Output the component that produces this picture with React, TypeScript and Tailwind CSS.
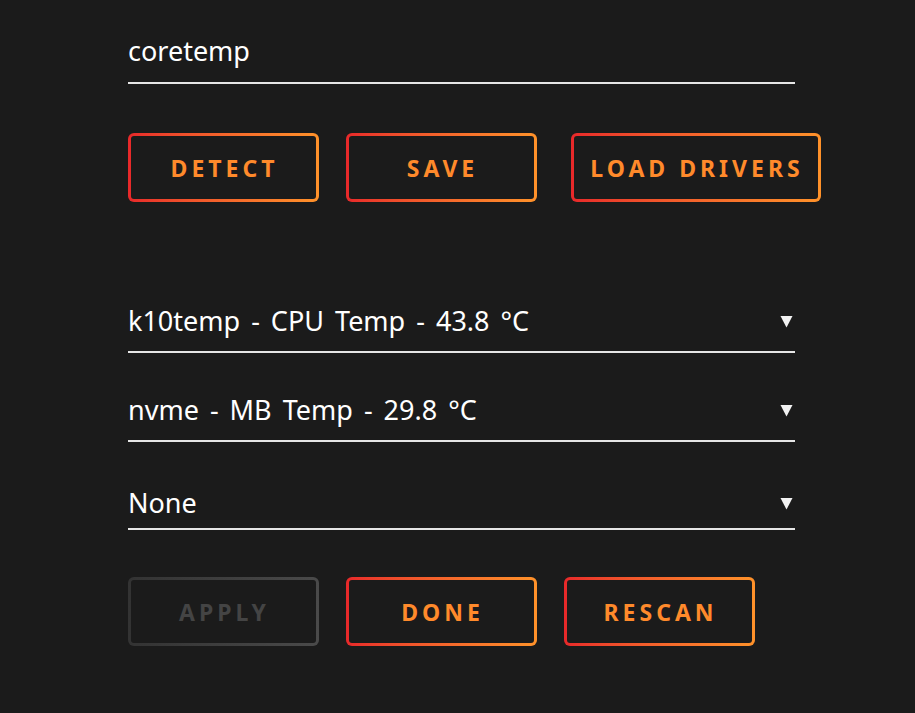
import React from "react";

const font = { fontFamily: '"Noto Sans", "Open Sans", sans-serif' };

function GradButton({ label, disabled, width = "w-[191px]" }: { label: string; disabled?: boolean; width?: string }) {
  return (
    <div
      className={`${width} h-[69px] rounded-[6px] p-[3px] ${
        disabled
          ? "bg-gradient-to-r from-[#333333] to-[#4a4a4a]"
          : "bg-gradient-to-r from-[#e8282a] to-[#ff922a]"
      }`}
    >
      <div
        className={`h-full w-full rounded-[3px] bg-[#1b1b1b] flex items-center justify-center text-[23px] font-bold tracking-[4px] pl-[2px] pt-[2px] ${
          disabled ? "text-[#444444]" : "text-[#ff8a2b]"
        }`}
      >
        {label}
      </div>
    </div>
  );
}

function Select({ value, mt, pb }: { value: string; mt: string; pb: string }) {
  return (
    <div className={`${mt} ${pb} flex items-center justify-between border-b-2 border-[#e6e6e6]`}>
      <span className="text-[27px] leading-[36px] text-white [word-spacing:4px]">{value}</span>
      <svg width="13" height="13" viewBox="0 0 13 13" className="mr-[2px]">
        <path d="M0.5 1 L12.5 1 L6.5 12.5 Z" fill="#f2f2f2" />
      </svg>
    </div>
  );
}

export default function App() {
  return (
    <main className="min-h-screen bg-[#1b1b1b]" style={font}>
      <div className="pl-[128px] pt-[33px]">
        <div className="w-[667px]">
          {/* Driver name */}
          <div className="pb-[13px] border-b-2 border-[#e6e6e6]">
            <span className="text-[27px] leading-[36px] text-white">coretemp</span>
          </div>
        </div>

        {/* Top actions */}
        <div className="mt-[49px] flex">
          <GradButton label="DETECT" />
          <div className="ml-[27px]">
            <GradButton label="SAVE" />
          </div>
          <div className="ml-[34px]">
            <GradButton label="LOAD DRIVERS" width="w-[250px]" />
          </div>
        </div>

        {/* Sensors */}
        <div className="w-[667px]">
          <Select value="k10temp - CPU Temp - 43.8 °C" mt="mt-[101px]" pb="pb-[12px]" />
          <Select value="nvme - MB Temp - 29.8 °C" mt="mt-[39px]" pb="pb-[12px]" />
          <Select value="None" mt="mt-[43px]" pb="pb-[7px]" />
        </div>

        {/* Bottom actions */}
        <div className="mt-[47px] flex gap-[27px] pb-[67px]">
          <GradButton label="APPLY" disabled />
          <GradButton label="DONE" />
          <GradButton label="RESCAN" />
        </div>
      </div>
    </main>
  );
}
